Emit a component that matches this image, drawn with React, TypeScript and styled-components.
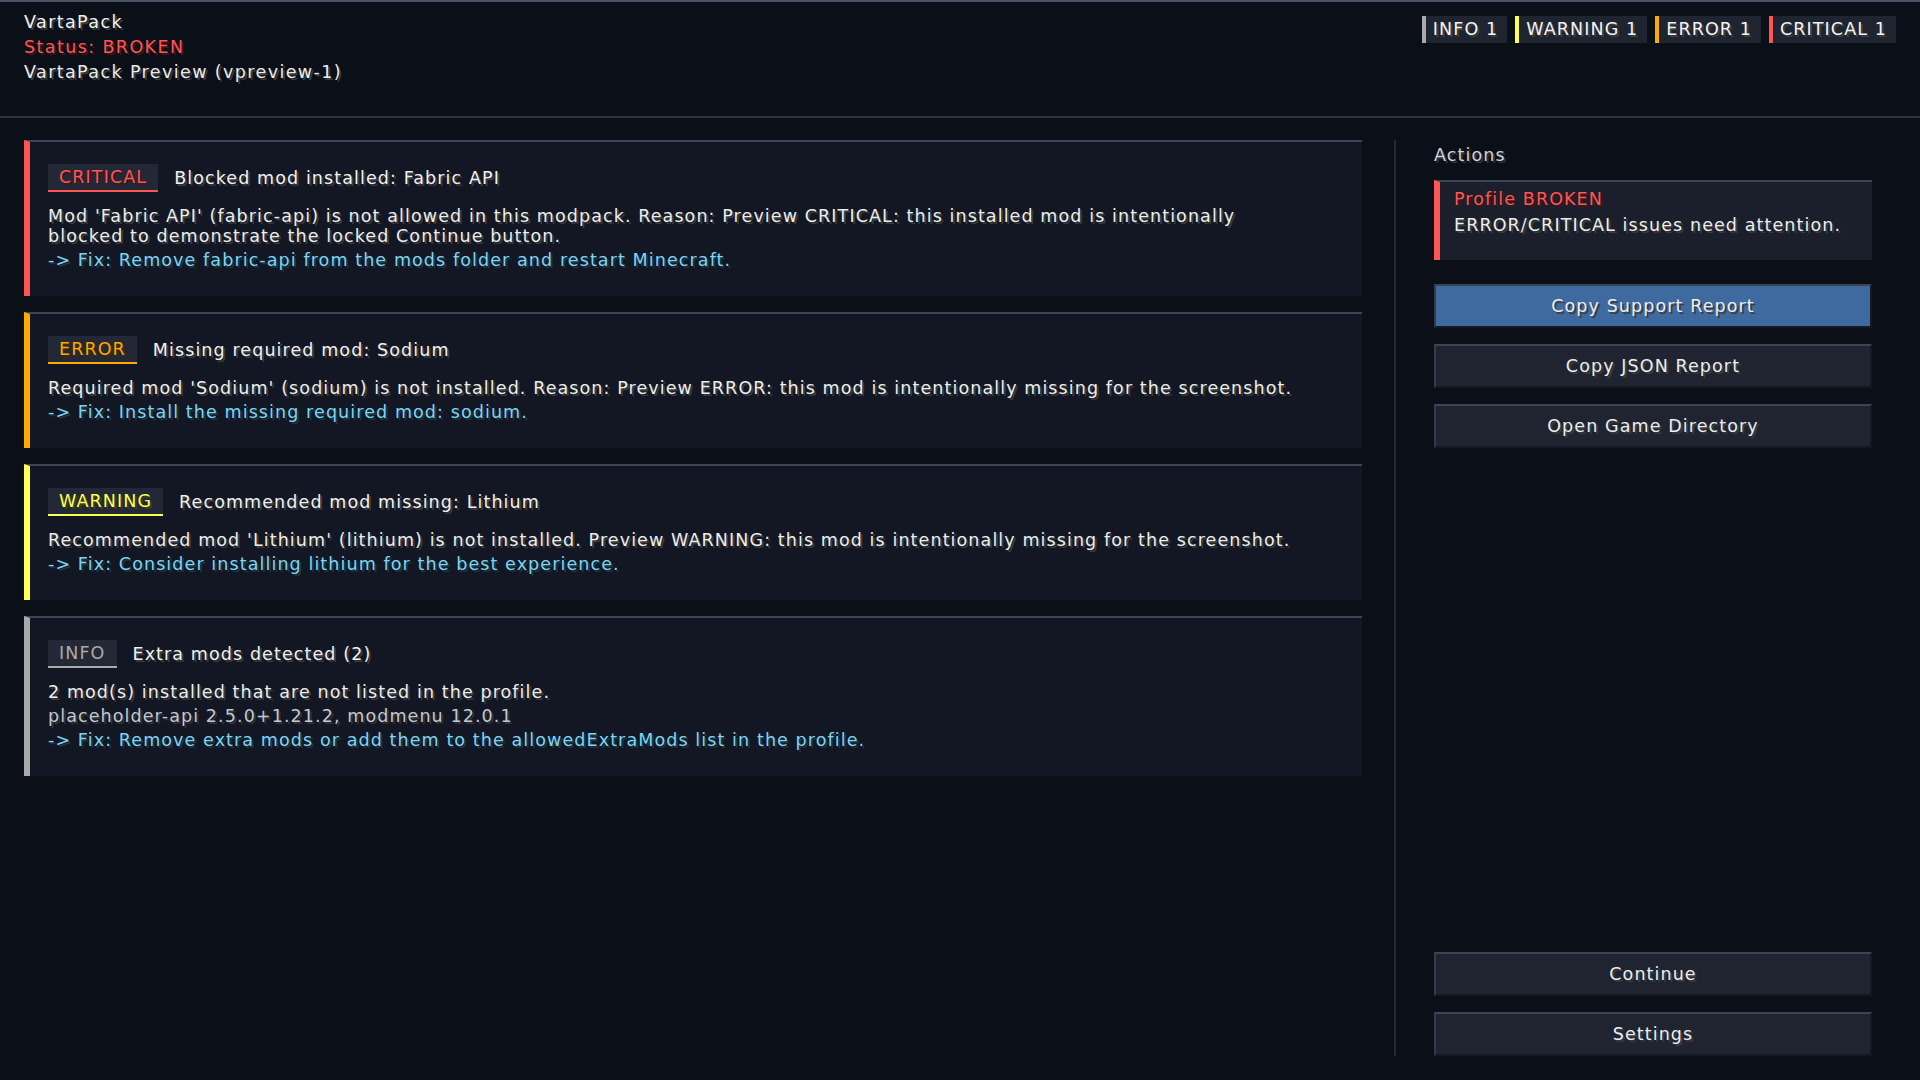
import styled, { createGlobalStyle, css } from 'styled-components';

type Level = 'INFO' | 'WARNING' | 'ERROR' | 'CRITICAL';

const levelColors: Record<Level, string> = {
  INFO: '#aaaaaa',
  WARNING: '#ffff55',
  ERROR: '#ffaa00',
  CRITICAL: '#ff5555',
};

// game-style drop shadow: same colour at a quarter of the brightness
const shadowOf = (hex: string) => {
  const n = parseInt(hex.slice(1), 16);
  const r = ((n >> 16) & 255) >> 2;
  const g = ((n >> 8) & 255) >> 2;
  const b = (n & 255) >> 2;
  return `rgb(${r}, ${g}, ${b})`;
};

const mcText = (color: string) => css`
  color: ${color};
  text-shadow: 2px 2px 0 ${shadowOf(color)};
`;

const GlobalStyle = createGlobalStyle`
  html, body {
    margin: 0;
    padding: 0;
    background: #0b0f17;
  }
  body {
    font-family: 'DejaVu Sans', 'Liberation Sans', sans-serif;
    font-size: 17.5px;
    letter-spacing: 1.1px;
    color: #f0f0f0;
  }
`;

const Screen = styled.div`
  width: 1920px;
  height: 1080px;
  display: flex;
  flex-direction: column;
  background: #0b0f17;
  overflow: hidden;
`;

const Header = styled.header`
  height: 118px;
  box-sizing: border-box;
  border-top: 2px solid #4a5466;
  border-bottom: 2px solid #2c3341;
  padding: 8px 24px 0 24px;
  display: flex;
  justify-content: space-between;
  align-items: flex-start;
`;

const HeaderLines = styled.div`
  display: flex;
  flex-direction: column;
`;

const HeaderLine = styled.div<{ $color: string }>`
  line-height: 25px;
  white-space: nowrap;
  letter-spacing: 1.4px;
  ${(p) => mcText(p.$color)}
`;

const Counts = styled.div`
  display: flex;
  gap: 8px;
  margin-top: 6px;
`;

const Count = styled.div<{ $level: Level }>`
  height: 27px;
  box-sizing: border-box;
  line-height: 27px;
  padding: 0 9px 0 7px;
  border-left: 4px solid ${(p) => levelColors[p.$level]};
  background: #1e2430;
  white-space: nowrap;
  ${mcText('#f4f4f4')}
`;

const Main = styled.main`
  flex: 1;
  display: flex;
  box-sizing: border-box;
  padding: 22px 48px 24px 24px;
  min-height: 0;
`;

const IssueList = styled.section`
  flex: 1;
  display: flex;
  flex-direction: column;
  gap: 16px;
`;

const Divider = styled.div`
  width: 2px;
  background: #222937;
  margin: 0 38px 0 32px;
`;

const Card = styled.article<{ $level: Level }>`
  background: #121723;
  border-top: 2px solid #3c4556;
  border-left: 6px solid ${(p) => levelColors[p.$level]};
  padding: 22px 24px 26px 18px;
`;

const CardHead = styled.div`
  display: flex;
  align-items: center;
  gap: 16px;
`;

const LevelTag = styled.span<{ $level: Level }>`
  height: 28px;
  box-sizing: border-box;
  line-height: 26px;
  padding: 0 11px;
  background: #222836;
  border-bottom: 2px solid ${(p) => levelColors[p.$level]};
  ${(p) => mcText(levelColors[p.$level])}
`;

const CardTitle = styled.span`
  white-space: nowrap;
  ${mcText('#f2f2f2')}
`;

const CardBody = styled.div`
  margin-top: 14px;
  display: flex;
  flex-direction: column;
  gap: 4px;
`;

const Para = styled.div<{ $color: string }>`
  line-height: 20px;
  ${(p) => mcText(p.$color)}
  span {
    display: block;
    white-space: nowrap;
  }
`;

const Side = styled.aside`
  width: 438px;
  display: flex;
  flex-direction: column;
`;

const SideLabel = styled.div`
  margin-top: 5px;
  line-height: 20px;
  ${mcText('#cfd3db')}
`;

const StatusBox = styled.div`
  margin-top: 15px;
  height: 80px;
  box-sizing: border-box;
  background: #1a1f2b;
  border-top: 2px solid #3c4556;
  border-left: 6px solid #ff5555;
  padding: 7px 14px 0 14px;
  display: flex;
  flex-direction: column;
  gap: 6px;
`;

const StatusLine = styled.div<{ $color: string }>`
  line-height: 20px;
  white-space: nowrap;
  ${(p) => mcText(p.$color)}
`;

const ButtonStack = styled.div<{ $top?: number }>`
  display: flex;
  flex-direction: column;
  gap: 16px;
  margin-top: ${(p) => p.$top ?? 0}px;
`;

const Spacer = styled.div`
  flex: 1;
`;

const Button = styled.button<{ $primary?: boolean }>`
  height: 44px;
  width: 100%;
  box-sizing: border-box;
  font: inherit;
  letter-spacing: inherit;
  cursor: pointer;
  background: ${(p) => (p.$primary ? '#3e6aa0' : '#1f2430')};
  border-top: 2px solid #3b4455;
  border-left: 2px solid #343c4a;
  border-right: 2px solid #131822;
  border-bottom: 2px solid #131822;
  ${mcText('#eceef3')}
`;

interface Issue {
  level: Level;
  title: string;
  body: string[];
  detail?: string;
  fix: string;
}

const issues: Issue[] = [
  {
    level: 'CRITICAL',
    title: 'Blocked mod installed: Fabric API',
    body: [
      "Mod 'Fabric API' (fabric-api) is not allowed in this modpack. Reason: Preview CRITICAL: this installed mod is intentionally",
      'blocked to demonstrate the locked Continue button.',
    ],
    fix: '-> Fix: Remove fabric-api from the mods folder and restart Minecraft.',
  },
  {
    level: 'ERROR',
    title: 'Missing required mod: Sodium',
    body: [
      "Required mod 'Sodium' (sodium) is not installed. Reason: Preview ERROR: this mod is intentionally missing for the screenshot.",
    ],
    fix: '-> Fix: Install the missing required mod: sodium.',
  },
  {
    level: 'WARNING',
    title: 'Recommended mod missing: Lithium',
    body: [
      "Recommended mod 'Lithium' (lithium) is not installed. Preview WARNING: this mod is intentionally missing for the screenshot.",
    ],
    fix: '-> Fix: Consider installing lithium for the best experience.',
  },
  {
    level: 'INFO',
    title: 'Extra mods detected (2)',
    body: ['2 mod(s) installed that are not listed in the profile.'],
    detail: 'placeholder-api 2.5.0+1.21.2, modmenu 12.0.1',
    fix: '-> Fix: Remove extra mods or add them to the allowedExtraMods list in the profile.',
  },
];

const counts: Level[] = ['INFO', 'WARNING', 'ERROR', 'CRITICAL'];

function App() {
  return (
    <Screen>
      <GlobalStyle />
      <Header>
        <HeaderLines>
          <HeaderLine $color="#f2f2f2">VartaPack</HeaderLine>
          <HeaderLine $color="#ff5555">Status: BROKEN</HeaderLine>
          <HeaderLine $color="#ececec">VartaPack Preview (vpreview-1)</HeaderLine>
        </HeaderLines>
        <Counts>
          {counts.map((lvl) => (
            <Count key={lvl} $level={lvl}>
              {lvl} {issues.filter((i) => i.level === lvl).length}
            </Count>
          ))}
        </Counts>
      </Header>

      <Main>
        <IssueList>
          {issues.map((issue) => (
            <Card key={issue.title} $level={issue.level}>
              <CardHead>
                <LevelTag $level={issue.level}>{issue.level}</LevelTag>
                <CardTitle>{issue.title}</CardTitle>
              </CardHead>
              <CardBody>
                <Para $color="#eeeeee">
                  {issue.body.map((line) => (
                    <span key={line}>{line}</span>
                  ))}
                </Para>
                {issue.detail && (
                  <Para $color="#c4c8d0">
                    <span>{issue.detail}</span>
                  </Para>
                )}
                <Para $color="#7fd4f5">
                  <span>{issue.fix}</span>
                </Para>
              </CardBody>
            </Card>
          ))}
        </IssueList>

        <Divider />

        <Side>
          <SideLabel>Actions</SideLabel>
          <StatusBox>
            <StatusLine $color="#ff5555">Profile BROKEN</StatusLine>
            <StatusLine $color="#eeeeee">ERROR/CRITICAL issues need attention.</StatusLine>
          </StatusBox>
          <ButtonStack $top={24}>
            <Button $primary>Copy Support Report</Button>
            <Button>Copy JSON Report</Button>
            <Button>Open Game Directory</Button>
          </ButtonStack>
          <Spacer />
          <ButtonStack>
            <Button>Continue</Button>
            <Button>Settings</Button>
          </ButtonStack>
        </Side>
      </Main>
    </Screen>
  );
}

export default App;
